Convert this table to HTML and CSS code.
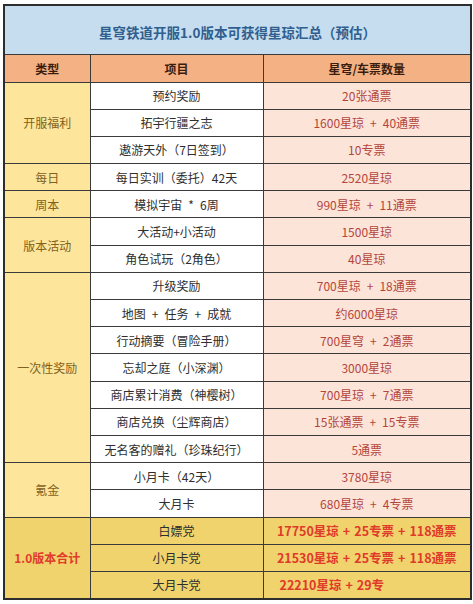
FILE: index.html
```html
<!DOCTYPE html>
<html lang="zh">
<head>
<meta charset="utf-8">
<link rel="stylesheet" href="styles.css">
</head>
<body>
<div class="wrap">
<table class="sheet">
  <colgroup><col class="c1"><col class="c2"><col class="c3"></colgroup>
  <tr class="title-row"><td colspan="3" class="title">星穹铁道开服1.0版本可获得星琼汇总（预估）</td></tr>
  <tr class="head-row"><th>类型</th><th>项目</th><th>星穹/车票数量</th></tr>
  <tr class="r"><td rowspan="3" class="type">开服福利</td><td class="item">预约奖励</td><td class="val">20张通票</td></tr>
  <tr class="r"><td class="item">拓宇行疆之志</td><td class="val">1600星琼<span class="plus">+</span>40通票</td></tr>
  <tr class="r"><td class="item">遨游天外（7日签到）</td><td class="val">10专票</td></tr>
  <tr class="r"><td class="type">每日</td><td class="item">每日实训（委托）42天</td><td class="val">2520星琼</td></tr>
  <tr class="r"><td class="type">周本</td><td class="item">模拟宇宙<span class="plus">*</span>6周</td><td class="val">990星琼<span class="plus">+</span>11通票</td></tr>
  <tr class="r"><td rowspan="2" class="type">版本活动</td><td class="item">大活动+小活动</td><td class="val">1500星琼</td></tr>
  <tr class="r"><td class="item">角色试玩（2角色）</td><td class="val">40星琼</td></tr>
  <tr class="r"><td rowspan="7" class="type">一次性奖励</td><td class="item">升级奖励</td><td class="val">700星琼<span class="plus">+</span>18通票</td></tr>
  <tr class="r"><td class="item">地图<span class="plus">+</span>任务<span class="plus">+</span>成就</td><td class="val">约6000星琼</td></tr>
  <tr class="r"><td class="item">行动摘要（冒险手册）</td><td class="val">700星穹<span class="plus">+</span>2通票</td></tr>
  <tr class="r"><td class="item">忘却之庭（小深渊）</td><td class="val">3000星琼</td></tr>
  <tr class="r"><td class="item">商店累计消费（神樱树）</td><td class="val">700星琼<span class="plus">+</span>7通票</td></tr>
  <tr class="r"><td class="item">商店兑换（尘辉商店）</td><td class="val">15张通票<span class="plus">+</span>15专票</td></tr>
  <tr class="r"><td class="item">无名客的赠礼（珍珠纪行）</td><td class="val">5通票</td></tr>
  <tr class="r"><td rowspan="2" class="type">氪金</td><td class="item">小月卡（42天）</td><td class="val">3780星琼</td></tr>
  <tr class="r"><td class="item">大月卡</td><td class="val">680星琼<span class="plus">+</span>4专票</td></tr>
  <tr class="r total"><td rowspan="3" class="ttype">1.0版本合计</td><td class="titem">白嫖党</td><td class="tval">17750星琼<span class="plus">+</span>25专票<span class="plus">+</span>118通票</td></tr>
  <tr class="r total"><td class="titem">小月卡党</td><td class="tval">21530星琼<span class="plus">+</span>25专票<span class="plus">+</span>118通票</td></tr>
  <tr class="r total"><td class="titem">大月卡党</td><td class="tval left">22210星琼<span class="plus">+</span>29专</td></tr>
</table>
</div>
</body>
</html>
```
FILE: styles.css
```css
html, body {
  margin: 0;
  padding: 0;
  background: #ffffff;
}
body {
  font-family: "Noto Sans CJK SC", "Noto Sans", sans-serif;
  width: 473px;
  height: 604px;
  overflow: hidden;
}
.wrap {
  padding: 4px 3px 0 3px;
}
.sheet {
  width: 467px;
  border-collapse: collapse;
  table-layout: fixed;
  border: 2px solid #2d2d2d;
}
.c1 { width: 86px; }
.c2 { width: 173px; }
.c3 { width: 208px; }
.sheet td, .sheet th {
  border: 1px solid #3a3a3a;
  padding: 0;
  text-align: center;
  vertical-align: middle;
  white-space: nowrap;
  overflow: hidden;
}
.plus {
  display: inline-block;
  margin: 0 6px;
}
.title-row { height: 49px; }
.title {
  background: #c6dcef;
  color: #2f5f8e;
  font-size: 13.5px;
  font-weight: 700;
  padding-top: 4px !important;
}
.head-row { height: 28px; }
.head-row th {
  background: #f3b184;
  color: #3b1d0e;
  font-size: 12px;
  font-weight: 700;
}
.r { height: 27.2px; }
.type {
  background: #fde69c;
  color: #7f611d;
  font-size: 12px;
}
.item {
  background: #ffffff;
  color: #2e2e2e;
  font-size: 12px;
}
.val {
  background: #fce4d9;
  color: #b3463c;
  font-size: 12px;
}
.total td {
  background: #f0d36c;
}
.ttype {
  color: #e03a2b;
  font-size: 12px;
  font-weight: 700;
}
.titem {
  color: #2e2e2e;
  font-size: 12px;
}
.tval {
  color: #e03a2b;
  font-size: 12.5px;
  font-weight: 700;
}
.tval .plus {
  margin: 0 4px;
}
.tval.left {
  text-align: left;
  padding-left: 16px !important;
}
```
